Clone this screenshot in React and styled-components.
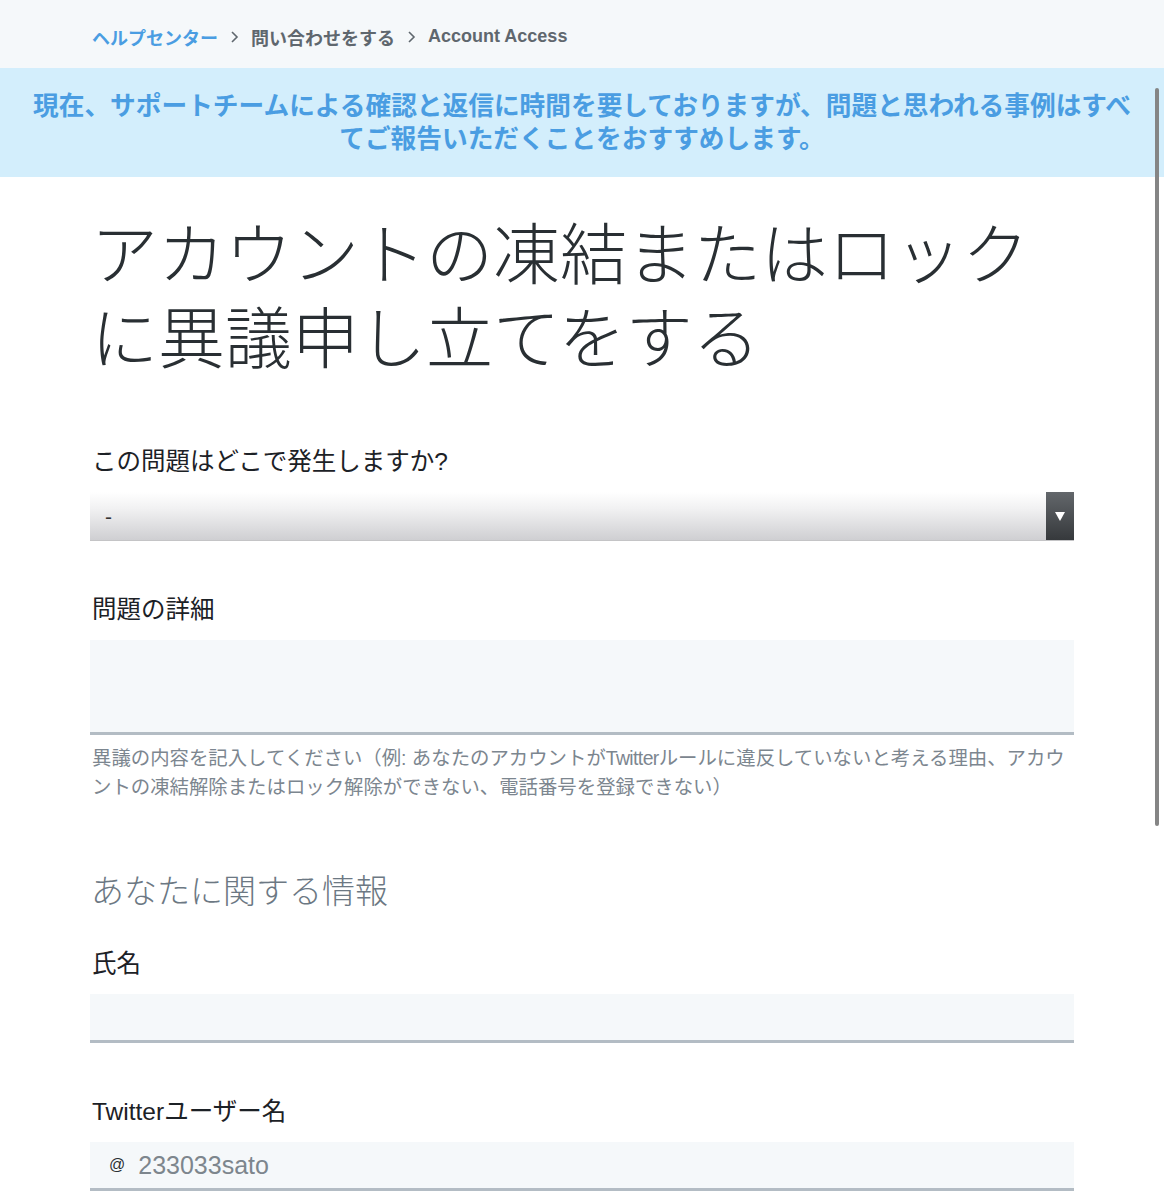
import React from 'react'
import styled, { createGlobalStyle } from 'styled-components'

const GlobalStyle = createGlobalStyle`
  html, body {
    margin: 0;
    padding: 0;
    background: #ffffff;
  }
  body {
    font-family: "Liberation Sans", "Noto Sans CJK JP", sans-serif;
    color: #14171a;
  }
`

const Page = styled.div`
  position: relative;
  width: 1164px;
  min-height: 1200px;
  overflow: hidden;
`

// パンくず
const Crumbs = styled.nav`
  height: 68px;
  background: #f5f8fa;
  display: flex;
  align-items: center;
  padding: 5px 0 0 92px;
  box-sizing: border-box;
  gap: 9px;
  font-size: 18px;
  font-weight: 700;
  color: #5f676e;
`

const CrumbLink = styled.span`
  color: ${p => (p.$active ? '#4a9de2' : '#5f676e')};
`

const Chevron = styled.svg`
  width: 9px;
  height: 14px;
  margin: 0 3px;
`

const Notice = styled.div`
  background: #d3eefc;
  padding: 22px 20px 21px;
  text-align: center;
  font-size: 25.7px;
  line-height: 33px;
  font-weight: 700;
  color: #4a9de2;
`

const Content = styled.main`
  width: 984px;
  margin: 0 auto;
  padding-bottom: 40px;
`

const Title = styled.h1`
  margin: 31px 0 0 1px;
  font-size: 67px;
  line-height: 84px;
  font-weight: 300;
  color: #292f33;
  font-family: "Noto Sans CJK JP", sans-serif;
`

const Field = styled.div`
  margin-top: ${p => p.$top || 54}px;
`

const Label = styled.label`
  display: block;
  margin: 0 0 14px 2px;
  font-size: 24.5px;
  line-height: 32px;
  color: #1c2126;
`

const SelectBox = styled.div`
  height: 49px;
  display: flex;
  align-items: stretch;
  background: linear-gradient(#ffffff 0%, #f1f1f2 35%, #cfcfd2 100%);
  border-bottom: 1px solid #c4c4c6;
  box-sizing: border-box;
`

const SelectValue = styled.span`
  flex: 1;
  padding: 13px 0 0 15px;
  font-size: 21px;
  color: #333;
`

const SelectButton = styled.div`
  width: 28px;
  display: flex;
  align-items: center;
  justify-content: center;
  background: linear-gradient(#63676b, #36393c);
`

const TextArea = styled.div`
  height: 92px;
  background: #f5f8fa;
  border-bottom: 3px solid #b3bcc4;
`

const Help = styled.p`
  margin: 9px 0 0 2px;
  font-size: 19.4px;
  line-height: 29px;
  color: #7c868f;
`

const Thin = styled.span`
  font-family: "Liberation Sans", sans-serif;
  font-weight: 300;
  letter-spacing: -0.6px;
`

const SectionTitle = styled.h2`
  margin: 65px 0 0 1px;
  font-size: 33px;
  line-height: 44px;
  font-weight: 300;
  color: #6c7883;
  font-family: "Noto Sans CJK JP", sans-serif;
`

const Input = styled.div`
  height: 46px;
  display: flex;
  align-items: center;
  gap: 13px;
  padding-left: 19px;
  background: #f5f8fa;
  border-bottom: 3px solid #b3bcc4;
`

const At = styled.span`
  font-size: 16px;
  color: #2a2f33;
`

const Value = styled.span`
  font-size: 25px;
  color: #7d868d;
`

// スクロールバー (オーバーレイ)
const ScrollBar = styled.div`
  position: absolute;
  left: 1155px;
  top: 88px;
  width: 4px;
  height: 738px;
  border-radius: 2px;
  background: #858585;
`

const App = () => {
  return (
    <Page>
      <GlobalStyle />
      <Crumbs>
        <CrumbLink $active>ヘルプセンター</CrumbLink>
        <Chevron viewBox="0 0 9 14">
          <path d="M2 2 L7 7 L2 12" fill="none" stroke="#5f676e" strokeWidth="1.6" />
        </Chevron>
        <CrumbLink>問い合わせをする</CrumbLink>
        <Chevron viewBox="0 0 9 14">
          <path d="M2 2 L7 7 L2 12" fill="none" stroke="#5f676e" strokeWidth="1.6" />
        </Chevron>
        <CrumbLink>Account Access</CrumbLink>
      </Crumbs>
      <Notice>
        現在、サポートチームによる確認と返信に時間を要しておりますが、問題と思われる事例はすべ
        <br />
        てご報告いただくことをおすすめします。
      </Notice>
      <Content>
        <Title>
          アカウントの凍結またはロック
          <br />
          に異議申し立てをする
        </Title>
        <Field $top={70}>
          <Label>この問題はどこで発生しますか?</Label>
          <SelectBox>
            <SelectValue>-</SelectValue>
            <SelectButton>
              <svg width="10" height="9" viewBox="0 0 10 9">
                <path d="M0 0 H10 L5 9 Z" fill="#ffffff" />
              </svg>
            </SelectButton>
          </SelectBox>
        </Field>
        <Field $top={53}>
          <Label>問題の詳細</Label>
          <TextArea />
          <Help>
            異議の内容を記入してください（例: あなたのアカウントが<Thin>Twitter</Thin>ルールに違反していないと考える理由、アカウ
            <br />
            ントの凍結解除またはロック解除ができない、電話番号を登録できない）
          </Help>
        </Field>
        <SectionTitle>あなたに関する情報</SectionTitle>
        <Field $top={37}>
          <Label>氏名</Label>
          <Input />
        </Field>
        <Field $top={53}>
          <Label>Twitterユーザー名</Label>
          <Input>
            <At>@</At>
            <Value>233033sato</Value>
          </Input>
        </Field>
      </Content>
      <ScrollBar />
    </Page>
  )
}

export default App
